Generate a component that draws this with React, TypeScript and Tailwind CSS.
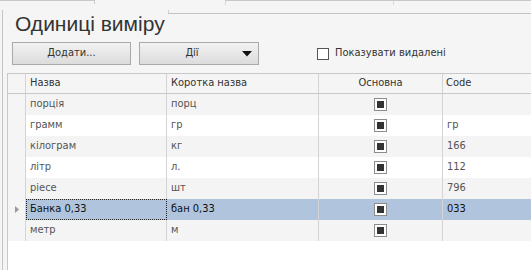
import React from "react";

interface IRow {
    name: string;
    short: string;
    code: string;
}

const rows: IRow[] = [
    { name: "порція", short: "порц", code: "" },
    { name: "грамм", short: "гр", code: "гр" },
    { name: "кілограм", short: "кг", code: "166" },
    { name: "літр", short: "л.", code: "112" },
    { name: "piece", short: "шт", code: "796" },
    { name: "Банка 0,33", short: "бан 0,33", code: "033" },
    { name: "метр", short: "м", code: "" },
];

const selected = 5;

const Check = () => (
    <span className="w-[13px] h-[13px] border border-[#8c8c8c] bg-white flex items-center justify-center">
        <span className="w-[7px] h-[7px] bg-[#333]" />
    </span>
);

const App = () => {
    return (
        <div
            className="w-[531px] h-[270px] bg-[#f5f5f5] flex flex-col overflow-hidden text-[11px] text-[#333]"
            style={{ fontFamily: "'DejaVu Sans Condensed', 'Liberation Sans', sans-serif" }}
        >
            {/* tab strip */}
            <div className="flex h-[10px] shrink-0">
                <div className="w-[95px] border-t border-r border-[#c8c8c8] h-[4px]" />
                <div className="w-[130px]" />
                <div className="flex-1 flex border-t border-[#c8c8c8]">
                    <div className="w-[168px] border-l border-[#d8d8d8] h-[4px]" />
                    <div className="w-[84px] border-l border-[#d8d8d8] h-[4px]" />
                    <div className="flex-1" />
                </div>
            </div>

            <div className="flex-1 flex flex-col ml-[2px] border-l border-[#c4c4c4]">
                <div className="flex h-[27px] shrink-0">
                    <div
                        className="w-[165px] pl-[12px] text-[21px] leading-[27px] text-[#333]"
                        style={{ fontFamily: "'Liberation Sans', sans-serif" }}
                    >
                        Одиниці виміру
                    </div>
                    <div className="flex-1 flex flex-col">
                        <div className="h-[3px] w-px bg-[#d0d0d0]" />
                        <div className="border-t border-[#c4c4c4]" />
                    </div>
                </div>

                <div className="flex items-center h-[23px] mt-[5px] shrink-0">
                    <button className="ml-[9px] w-[119px] h-[23px] border border-[#a9a9a9] bg-gradient-to-b from-[#f2f2f2] to-[#dcdcdc] text-[#333] text-[11px]">
                        Додати...
                    </button>
                    <button className="ml-[8px] w-[120px] h-[23px] border border-[#a9a9a9] bg-gradient-to-b from-[#f2f2f2] to-[#dcdcdc] text-[#333] text-[11px] flex items-center">
                        <span className="flex-1 text-center pl-[2px]">Дії</span>
                        <svg width="10" height="6" viewBox="0 0 10 6" className="mr-[6px]">
                            <polygon points="0,0 10,0 5,5.5" fill="#111" />
                        </svg>
                    </button>
                    <span className="ml-[58px] w-[12px] h-[12px] border border-[#555] bg-white" />
                    <span className="ml-[6px] text-[#333]">Показувати видалені</span>
                </div>

                <div className="flex-1 mt-[8px] ml-[4px] border-l border-t border-[#c8c8c8] bg-white flex flex-col">
                    <div className="grid grid-cols-[18px_141px_152px_124px_1fr] h-[20px] border-b border-[#c8c8c8] bg-[#f5f5f5] text-[#333]">
                        <div className="border-r border-[#d4d4d4]" />
                        <div className="border-r border-[#d4d4d4] pl-[4px] flex items-center">Назва</div>
                        <div className="border-r border-[#d4d4d4] pl-[4px] flex items-center">Коротка назва</div>
                        <div className="border-r border-[#d4d4d4] flex items-center justify-center">Основна</div>
                        <div className="pl-[3px] flex items-center">Code</div>
                    </div>
                    {rows.map((row, index) => {
                        const isSel = index === selected;
                        const bg = isSel ? "bg-[#b0c4de] text-[#111]" : index % 2 === 0 ? "bg-[#f4f4f4] text-[#555]" : "bg-white text-[#555]";
                        return (
                            <div key={index} className="grid grid-cols-[18px_141px_152px_124px_1fr] h-[21px]">
                                <div className="bg-[#f5f5f5] border-r border-[#d4d4d4] flex items-center justify-center">
                                    {isSel && (
                                        <svg width="4" height="7" viewBox="0 0 4 7">
                                            <polygon points="0,0 4,3.5 0,7" fill="#999" />
                                        </svg>
                                    )}
                                </div>
                                <div className={`${bg} ${isSel ? "border border-dotted border-[#222] pl-[3px]" : "border-r border-[#d4d4d4] pl-[4px]"} flex items-center`}>
                                    {row.name}
                                </div>
                                <div className={`${bg} border-r border-[#d4d4d4] pl-[4px] flex items-center`}>{row.short}</div>
                                <div className={`${bg} border-r border-[#d4d4d4] flex items-center justify-center`}>
                                    <Check />
                                </div>
                                <div className={`${bg} pl-[4px] flex items-center`}>{row.code}</div>
                            </div>
                        );
                    })}
                </div>
            </div>
        </div>
    );
};

export default App;
